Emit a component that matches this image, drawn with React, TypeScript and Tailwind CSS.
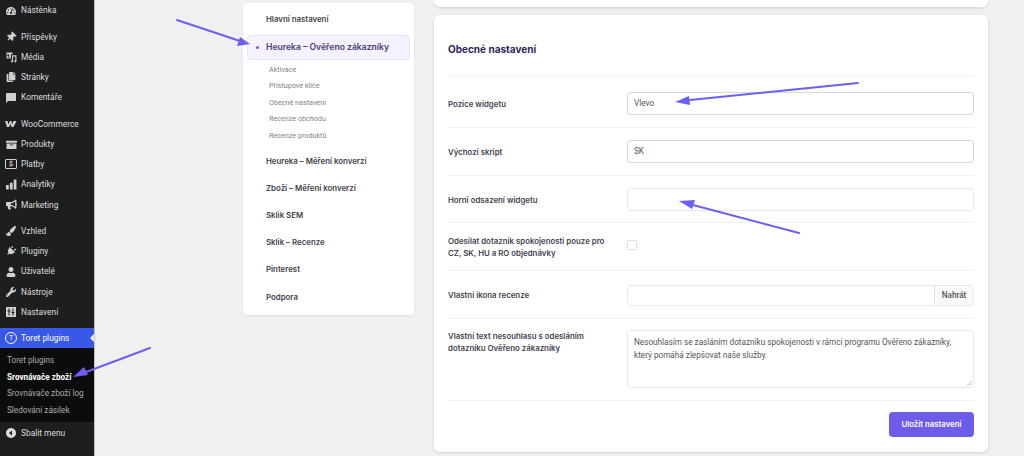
import type { ReactNode } from "react"
import {
  FaBullhorn,
  FaCopy,
  FaPaintBrush,
  FaPlug,
  FaThumbtack,
  FaUser,
  FaWrench,
  FaTachometerAlt,
} from "react-icons/fa"
import { BiSolidComment } from "react-icons/bi"

function Media() {
  return (
    <svg viewBox="0 0 20 20" className="w-[11px] h-[11px]" fill="currentColor">
      <path d="M1 1h11v3h-3v8H1zM4 4a2 2 0 1 0 .01 0zM3 10h4L5 7.500z" fillRule="evenodd" />
      <path d="M11 6h8v11a2 2 0 1 1-2-2v-7h-4v9a2 2 0 1 1-2-2z" />
    </svg>
  )
}

function WooIcon() {
  return (
    <svg viewBox="0 0 24 14" className="w-[12px] h-[8px]" fill="currentColor">
      <path d="M0 1h5l1.500 7L10 1h3l1 7 3-7h6l-6 12h-4l-1.500-6L8 13H4z" />
    </svg>
  )
}

function BoxIcon() {
  return (
    <svg viewBox="0 0 20 20" className="w-[11px] h-[11px]" fill="currentColor">
      <path d="M0 3h20v4H0zM1 8h18v10H1z" />
      <path d="M7 10h6v1.500H7z" fill="#1e1e1e" />
    </svg>
  )
}

function DollarIcon() {
  return (
    <span className="flex items-center justify-center w-[12px] h-[10px] border border-[#cfd0d1] rounded-[1px] text-[7px] leading-none font-bold">$</span>
  )
}

function BarsIcon() {
  return (
    <svg viewBox="0 0 20 20" className="w-[11px] h-[11px]" fill="currentColor">
      <path d="M0 11h5v8H0zM7 7h5v12H7zM14 1h5v18h-5z" />
    </svg>
  )
}

function SlidersIcon() {
  return (
    <svg viewBox="0 0 20 20" className="w-[10px] h-[10px]" fill="currentColor">
      <path fillRule="evenodd" d="M0 0h20v20H0zM5 3v4H3v2h2v8h2V9h2V7H7V3zM13 3v7h-2v2h2v5h2v-5h2v-2h-2V3z" />
    </svg>
  )
}

function CollapseIcon() {
  return (
    <svg viewBox="0 0 20 20" className="w-[10px] h-[10px]" fill="currentColor">
      <path fillRule="evenodd" d="M10 0a10 10 0 1 0 .01 0zM12 5v10L6 10z" />
    </svg>
  )
}

const small = "w-[10px] h-[10px]"

const menuGroups: { label: string; icon: ReactNode }[][] = [
  [{ label: "Nástěnka", icon: <FaTachometerAlt className={small} /> }],
  [
    { label: "Příspěvky", icon: <FaThumbtack className={`${small} rotate-45`} /> },
    { label: "Média", icon: <Media /> },
    { label: "Stránky", icon: <FaCopy className={small} /> },
    { label: "Komentáře", icon: <BiSolidComment className="w-[12px] h-[12px]" /> },
  ],
  [
    { label: "WooCommerce", icon: <WooIcon /> },
    { label: "Produkty", icon: <BoxIcon /> },
    { label: "Platby", icon: <DollarIcon /> },
    { label: "Analytiky", icon: <BarsIcon /> },
    { label: "Marketing", icon: <FaBullhorn className="w-[11px] h-[11px]" /> },
  ],
  [
    { label: "Vzhled", icon: <FaPaintBrush className={small} /> },
    { label: "Pluginy", icon: <FaPlug className={`${small} rotate-45`} /> },
    { label: "Uživatelé", icon: <FaUser className={small} /> },
    { label: "Nástroje", icon: <FaWrench className={small} /> },
    { label: "Nastavení", icon: <SlidersIcon /> },
  ],
]

function Sidebar() {
  return (
    <aside className="w-[95px] h-[456px] shrink-0 bg-[#1e1e1e] border-r border-r-[#c4c4c4] font-['Roboto',sans-serif] text-[8.400px] text-[#dcdddf] overflow-hidden">
      <div className="flex flex-col pt-[0.500px]">
        {menuGroups.map((group, i) => (
          <div key={i} className="flex flex-col mb-[6px]">
            {group.map((item) => (
              <div key={item.label} className="h-[20.250px] flex items-center">
                <span className="w-[21px] flex justify-center text-[#cfd0d1] shrink-0 pl-[1px]">{item.icon}</span>
                <span>{item.label}</span>
              </div>
            ))}
          </div>
        ))}
      </div>
      <div className="relative h-[20px] bg-[#3858e9] flex items-center text-white">
        <span className="w-[21px] flex justify-center shrink-0 pl-[1px]">
          <span className="w-[12px] h-[12px] rounded-full border border-white flex items-center justify-center text-[7px] leading-none">T</span>
        </span>
        <span>Toret plugins</span>
        <span className="absolute right-0 top-[6px] border-y-[4px] border-y-transparent border-r-[4px] border-r-[#f0f0f0]" />
      </div>
      <div className="h-[74px] bg-[#0c0c0c] flex flex-col justify-center pl-[7px] text-[8.200px] text-[#a9acaf] leading-[16.700px]">
        <div>Toret plugins</div>
        <div className="font-bold text-white">Srovnávače zboží</div>
        <div>Srovnávače zboží log</div>
        <div>Sledování zásilek</div>
      </div>
      <div className="h-[22px] flex items-center">
        <span className="w-[21px] flex justify-center text-[#dcdcdc] shrink-0">
          <CollapseIcon />
        </span>
        <span>Sbalit menu</span>
      </div>
    </aside>
  )
}

const subItems = ["Aktivace", "Přístupové klíče", "Obecné nastavení", "Recenze obchodu", "Recenze produktů"]
const navItems = ["Heureka – Měření konverzí", "Zboží – Měření konverzí", "Sklik SEM", "Sklik – Recenze", "Pinterest", "Podpora"]

function SettingsNav() {
  return (
    <nav className="w-[171px] h-[312px] mt-[3px] shrink-0 bg-white rounded-[4px] shadow-[0_1px_2px_rgba(0,0,0,0.08)] px-[4px] text-[7.850px] font-['Inter',sans-serif]">
      <div className="h-[32px] pt-[1px] flex items-center pl-[19px] font-semibold text-[#3f3f4a]">Hlavní nastavení</div>
      <div className="h-[25px] flex items-center bg-[#f5f1ff] border border-[#e9e3fb] rounded-[4px] text-[#4a3a78] font-semibold text-[8.600px]">
        <span className="w-[3px] h-[3px] rounded-full bg-[#6c5ce7] ml-[8px] mr-[7px]" />
        Heureka – Ověřeno zákazníky
      </div>
      <div className="flex flex-col pt-[1.500px] pl-[22px] font-['Roboto',sans-serif] text-[7.200px] text-[#82828c] leading-[16.500px]">
        {subItems.map((s) => (
          <div key={s}>{s}</div>
        ))}
      </div>
      <div className="flex flex-col pt-[4px]">
        {navItems.map((n) => (
          <div key={n} className="h-[27.200px] flex items-center pl-[19px] font-semibold text-[#3f3f4a]">{n}</div>
        ))}
      </div>
    </nav>
  )
}

const labelClass = "text-[7.850px] leading-[12px] font-semibold text-[#3f3f4f] font-['Inter',sans-serif] self-center"
const inputClass = "h-[23px] rounded-[3px] bg-white border-[1.500px] flex items-center px-[6px] font-['Roboto',sans-serif] text-[8.200px] text-[#555]"

function GeneralSettings() {
  return (
    <section className="h-[437px] bg-white rounded-[6px] shadow-[0_1px_3px_rgba(0,0,0,0.12)] px-[14px] flex flex-col">
      <h2 className="h-[61px] pt-[27px] text-[10px] leading-[14px] font-bold text-[#2f1f5f] font-['Inter',sans-serif]">Obecné nastavení</h2>
      <div className="grid grid-cols-[179px_1fr] border-t border-t-[#f2f2f4] pt-[15px] pb-[12px]">
        <div className={labelClass}>Pozice widgetu</div>
        <div className={`${inputClass} border-[#d8d8e2]`}>Vlevo</div>
      </div>
      <div className="grid grid-cols-[179px_1fr] border-t border-t-[#f2f2f4] py-[12px]">
        <div className={labelClass}>Výchozí skript</div>
        <div className={`${inputClass} border-[#d8d8e2]`}>SK</div>
      </div>
      <div className="grid grid-cols-[179px_1fr] border-t border-t-[#f2f2f4] pt-[12px] pb-[11px]">
        <div className={labelClass}>Horní odsazení widgetu</div>
        <div className={`${inputClass} border-[#e8e8ee]`} />
      </div>
      <div className="h-[48px] grid grid-cols-[179px_1fr] items-center border-t border-t-[#f2f2f4]">
        <div className={labelClass}>Odesílat dotazník spokojenosti pouze pro<br />CZ, SK, HU a RO objednávky</div>
        <div className="w-[10px] h-[10px] rounded-[2px] border border-[#dcdce2] -mt-[3px]" />
      </div>
      <div className="h-[48px] grid grid-cols-[179px_1fr] items-center border-t border-t-[#f2f2f4]">
        <div className={labelClass}>Vlastní ikona recenze</div>
        <div className="h-[21px] mt-[1px] flex rounded-[3px] border-[1.500px] border-[#e8e8ee] overflow-hidden">
          <div className="flex-1 bg-white" />
          <div className="w-[39px] flex items-center justify-center bg-[#f8f9fb] border-l border-l-[#e4e4ea] text-[8.200px] font-medium text-[#555] font-['Roboto',sans-serif]">Nahrát</div>
        </div>
      </div>
      <div className="h-[82px] grid grid-cols-[179px_1fr] border-t border-t-[#f2f2f4] pt-[11px]">
        <div className={`${labelClass} self-start`}>Vlastní text nesouhlasu s odesláním<br />dotazníku Ověřeno zákazníky</div>
        <div className="relative h-[58px] rounded-[3px] border-[1.500px] border-[#e8e8ee] px-[6px] pt-[5px] font-['Roboto',sans-serif] text-[8.200px] leading-[12.500px] text-[#555]">
          Nesouhlasím se zasláním dotazníku spokojenosti v rámci programu Ověřeno zákazníky,<br />který pomáhá zlepšovat naše služby.
          <svg viewBox="0 0 6 6" className="absolute right-[1px] bottom-[1px] w-[5px] h-[5px]" stroke="#999" strokeWidth="0.700">
            <path d="M0 6 6 0M3 6l3-3" />
          </svg>
        </div>
      </div>
      <div className="border-t border-t-[#f2f2f4] pt-[11px] flex justify-end">
        <div className="w-[85px] h-[25px] flex items-center justify-center rounded-[4px] bg-[#6c5ce7] text-white text-[7.800px] font-semibold font-['Inter',sans-serif]">Uložit nastavení</div>
      </div>
    </section>
  )
}

function Arrows() {
  const arrows = [
    { line: "M177 20 L240 41", head: "M250 44 L237 46 L240 37 Z" },
    { line: "M858 83 L690 100", head: "M675 102 L689 96 L690 105 Z" },
    { line: "M799 233 L693 205", head: "M679 201 L695 200 L692 209 Z" },
    { line: "M150 348 L86 372", head: "M73 377 L84 367 L88 375 Z" },
  ]
  return (
    <svg viewBox="0 0 1024 456" className="absolute inset-0 w-[1024px] h-[456px] pointer-events-none">
      {arrows.map((a) => (
        <g key={a.line}>
          <path d={a.line} stroke="#6b5ff5" strokeWidth="2" strokeLinecap="round" fill="none" />
          <path d={a.head} fill="#6b5ff5" />
        </g>
      ))}
    </svg>
  )
}

export default function App() {
  return (
    <div className="relative w-[1024px] h-[456px] bg-[#f0f0f0] flex overflow-hidden font-['Open_Sans',sans-serif]">
      <Sidebar />
      <div className="flex pl-[148px] gap-[20px]">
        <SettingsNav />
        <main className="w-[554px] flex flex-col gap-[8px]">
          <div className="h-[7px] bg-white rounded-b-[6px] shadow-[0_1px_3px_rgba(0,0,0,0.12)]" />
          <GeneralSettings />
        </main>
      </div>
      <Arrows />
    </div>
  )
}
